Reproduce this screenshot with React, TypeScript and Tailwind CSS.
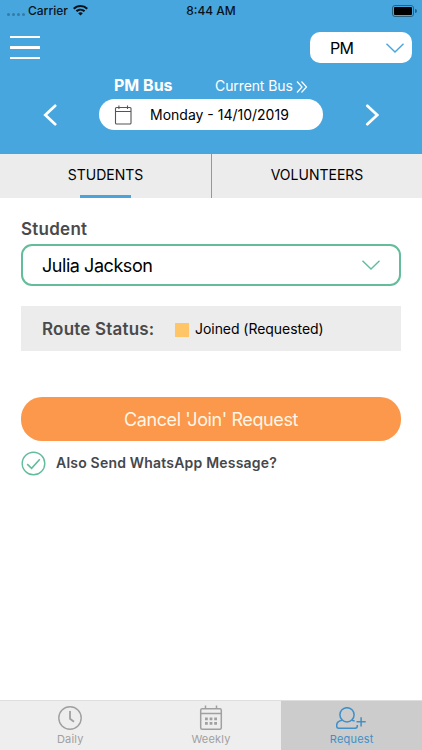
import type { ReactNode } from "react";

type IconProps = { className?: string };

function WifiIcon() {
  return (
    <svg width="15" height="11" viewBox="0 0 15 11" fill="#07121a">
      <path d="M7.5 0C4.7 0 2.1 1.05 0 2.9L1.5 4.45A8.8 8.8 0 0 1 13.5 4.45L15 2.9A11.2 11.2 0 0 0 7.5 0Z" />
      <path d="M7.5 3.7C5.7 3.7 4 4.35 2.7 5.5L4.2 7.05A4.9 4.9 0 0 1 10.8 7.05L12.3 5.5A7.2 7.2 0 0 0 7.5 3.7Z" />
      <path d="M7.5 7.3C6.6 7.3 5.8 7.65 5.2 8.15L7.5 10.6L9.8 8.15A3.4 3.4 0 0 0 7.5 7.3Z" />
    </svg>
  );
}

function ChevronDown({ className }: IconProps) {
  return (
    <svg width="18" height="10" viewBox="0 0 18 10" fill="none" stroke="currentColor" className={className}>
      <path d="M0.5 0.7L9 9L17.5 0.7" strokeWidth="1.4" />
    </svg>
  );
}

function CalendarIcon() {
  return (
    <svg width="18" height="20" viewBox="0 0 18 20" fill="none" stroke="#555" strokeWidth="1.1">
      <rect x="1.5" y="2.5" width="15.5" height="16.5" rx="1" />
      <path d="M1.5 6.5H17M4.9 0.4V4M13.5 0.4V4" />
    </svg>
  );
}

function ClockIcon() {
  return (
    <svg width="24" height="24" viewBox="0 0 24 24" fill="none" stroke="currentColor">
      <circle cx="12" cy="12" r="11.2" strokeWidth="1.4" />
      <path d="M12 5V12.7L16 15.8" strokeWidth="1.8" />
    </svg>
  );
}

function WeekIcon() {
  return (
    <svg width="24" height="26" viewBox="0 0 24 26" fill="none" stroke="currentColor" strokeWidth="1.5">
      <rect x="1.7" y="3.7" width="20.6" height="20.6" rx="1.5" />
      <path d="M1.7 8.5H22.3M6.5 0.5V4M17.5 0.5V4" />
      <path d="M6 13.8H18M6 18.4H18" strokeWidth="2.8" strokeDasharray="2.8 1.8" />
    </svg>
  );
}

function RequestIcon() {
  return (
    <svg width="30" height="22" viewBox="0 0 30 22" fill="none" stroke="currentColor" strokeWidth="1.5" className="mr-[2px]">
      <circle cx="11" cy="7.8" r="7.1" />
      <path d="M6.2 13.2C3 13.7 0.7 15.3 0.7 18.2V19.2C0.7 20.6 1.3 21.2 2.7 21.2H19.2C20.7 21.2 21.3 20.4 21.3 19V18M15.8 13.2L18.6 13.9" />
      <path d="M20.5 14.8H29.7M25.1 10.2V19.4" />
    </svg>
  );
}

function NavItem({ label, icon, active }: { label: string; icon: ReactNode; active?: boolean }) {
  return (
    <button
      className={`flex flex-1 flex-col items-center ${active ? "bg-[#cccccc] text-[#3f8fc8]" : "bg-[#eeeeee] text-[#a0a0a0]"}`}
    >
      <span className="flex h-[31px] items-center justify-center pt-[3px]">{icon}</span>
      <span className="text-[11px] leading-[15px] tracking-[0.2px]">{label}</span>
    </button>
  );
}

export default function App() {
  return (
    <div className="flex h-[750px] w-[422px] flex-col overflow-hidden bg-white font-['Inter',sans-serif] text-black">
      <header className="h-[154px] shrink-0 bg-[#48a6df]">
        <div className="grid h-[21px] grid-cols-3 items-center text-[12px] font-medium text-[#07121a]">
          <div className="flex items-center pl-[7px]">
            <span className="mt-[7px] flex gap-[2px]">
              {[0, 1, 2, 3].map((dot) => (
                <i key={dot} className="size-[3px] rounded-full bg-[#347ba7]" />
              ))}
            </span>
            <span className="mr-[5px] ml-[3px]">Carrier</span>
            <WifiIcon />
          </div>
          <span className="text-center">8:44 AM</span>
          <div className="flex items-center justify-end gap-px pr-[5px]">
            <span className="h-[12px] w-[22px] rounded-[3px] border border-[#29617f] p-px">
              <i className="block h-full rounded-[1px] bg-black" />
            </span>
            <i className="h-1 w-[2px] rounded-r-full bg-[#29617f]" />
          </div>
        </div>

        <div className="flex h-[53px] items-center justify-between pr-[10px] pl-[10px]">
          <button aria-label="Menu" className="flex w-[30px] flex-col gap-[8px]">
            <i className="h-[2.5px] bg-white" />
            <i className="h-[2.5px] bg-white" />
            <i className="h-[2.5px] bg-white" />
          </button>
          <button className="flex h-[31px] w-[102px] items-center justify-between rounded-[10px] bg-white pr-[8px] pl-[20px] text-[16px] tracking-[-0.7px]">
            PM
            <ChevronDown className="text-[#48a6df]" />
          </button>
        </div>

        <div className="flex h-[25px] items-center pl-[114px] text-white">
          <span className="w-[101px] pb-[3px] text-[16px] font-bold">PM Bus</span>
          <span className="pb-[2px] text-[14px] leading-[20px] tracking-[-0.1px]">Current Bus</span>
          <svg width="12" height="12" viewBox="0 0 12 12" fill="none" stroke="white" strokeWidth="1.2" className="ml-[3px]">
            <path d="M1 0.5L6 6L1 11.5M5.5 0.5L10.5 6L5.5 11.5" />
          </svg>
        </div>

        <div className="flex h-[31px] items-center">
          <svg width="14" height="22" viewBox="0 0 14 22" fill="none" stroke="white" strokeWidth="2.7" className="ml-[43px]">
            <path d="M12.2 1.8L2.3 11L12.2 20.2" strokeLinecap="round" />
          </svg>
          <div className="ml-[42px] flex h-[31px] w-[224px] items-center rounded-full bg-white pl-[15px]">
            <CalendarIcon />
            <span className="ml-[18px] text-[14px] whitespace-nowrap">Monday - 14/10/2019</span>
          </div>
          <svg width="14" height="22" viewBox="0 0 14 22" fill="none" stroke="white" strokeWidth="2.7" className="ml-[42px]">
            <path d="M2.3 1.8L12.2 11L2.3 20.2" strokeLinecap="round" />
          </svg>
        </div>
      </header>

      <div className="flex h-[44px] shrink-0 bg-[#ececec] text-[14px]">
        <button className="flex w-[212px] flex-col items-center justify-between border-r border-[#5aa9dd] pt-[11px]">
          <span className="leading-[20px]">STUDENTS</span>
          <i className="h-[3px] w-[51px] bg-[#4ba3dc]" />
        </button>
        <button className="flex flex-1 justify-center pt-[11px] leading-[20px]">VOLUNTEERS</button>
      </div>

      <main className="flex-1 px-[21px] pt-[20px]">
        <div className="h-[26px] text-[17px] leading-[22px] font-semibold tracking-[0.25px] text-[#4a4a4a]">Student</div>
        <button className="flex h-[42px] w-[380px] items-center justify-between rounded-[11px] border-2 border-[#63bc9a] pr-[19px] pl-[19px] text-[18px] tracking-[-0.45px]">
          Julia Jackson
          <ChevronDown className="text-[#63bc9a]" />
        </button>

        <div className="mt-[20px] flex h-[45px] w-[380px] items-center bg-[#ececec] pl-[21px]">
          <span className="w-[133px] pt-[2px] text-[17px] font-semibold tracking-[0.2px] text-[#4a4a4a]">Route Status:</span>
          <i className="mt-[3px] size-[14px] bg-[#ffc566]" />
          <span className="ml-[6px] text-[14px] tracking-[-0.05px]">Joined (Requested)</span>
        </div>

        <button className="mt-[46px] h-[44px] w-[380px] rounded-[21px] bg-[#fb984b] text-[18px] tracking-[-0.4px] text-[#fff6e6]">
          Cancel 'Join' Request
        </button>

        <label className="mt-[10px] flex items-center">
          <svg width="25" height="25" viewBox="0 0 25 25" fill="none" stroke="#63bc9a">
            <circle cx="12.5" cy="12.5" r="11.3" strokeWidth="1.4" />
            <path d="M6.2 13.2L10.6 17.3L18.8 8.3" strokeWidth="1.6" />
          </svg>
          <span className="ml-[10px] pb-[2px] text-[14px] font-semibold tracking-[0.2px] text-[#45474b]">
            Also Send WhatsApp Message?
          </span>
        </label>
      </main>

      <nav className="flex h-[50px] shrink-0 border-t border-[#dedede]">
        <NavItem label="Daily" icon={<ClockIcon />} />
        <NavItem label="Weekly" icon={<WeekIcon />} />
        <NavItem label="Request" icon={<RequestIcon />} active />
      </nav>
    </div>
  );
}
